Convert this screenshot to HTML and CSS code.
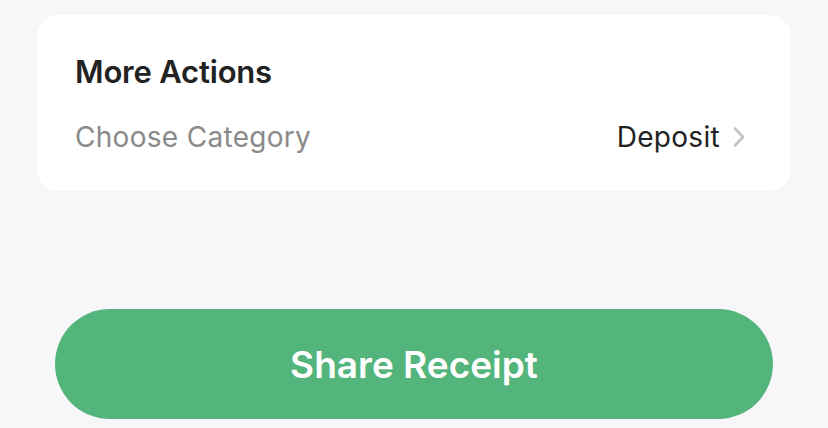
FILE: index.html
```html
<!DOCTYPE html>
<html>
<head>
<meta charset="utf-8">
<link rel="stylesheet" href="styles.css">
</head>
<body>
<div class="page">
  <section class="card">
    <h2 class="card-title">More Actions</h2>
    <div class="row">
      <span class="row-label">Choose Category</span>
      <span class="row-value">Deposit
        <svg class="chev" width="14" height="24" viewBox="0 0 14 24"><path d="M3 3.5 L11 12 L3 20.5" fill="none" stroke="#c4c4c8" stroke-width="2.6" stroke-linecap="round" stroke-linejoin="round"/></svg>
      </span>
    </div>
  </section>
  <button class="share">Share Receipt</button>
</div>
</body>
</html>
```
FILE: styles.css
```css
html, body {
  margin: 0;
  padding: 0;
  background: #f7f7fa;
}
.page {
  width: 828px;
  height: 428px;
  font-family: "Inter", "Noto Sans", sans-serif;
  display: flex;
  flex-direction: column;
  align-items: flex-start;
  padding-top: 15px;
  box-sizing: border-box;
}
.card {
  margin-left: 37px;
  width: 754px;
  height: 176px;
  box-sizing: border-box;
  background: #ffffff;
  border-radius: 22px;
  padding: 41px 45px 0 38px;
}
.card-title {
  margin: 0;
  font-size: 31px;
  font-weight: 600;
  color: #222222;
  line-height: 31px;
  letter-spacing: -0.2px;
}
.row {
  margin-top: 33px;
  display: flex;
  justify-content: space-between;
  align-items: center;
  line-height: 34px;
}
.row-label {
  font-size: 28px;
  color: #8a8a8a;
  letter-spacing: 0.3px;
}
.row-value {
  font-size: 28px;
  color: #222222;
  display: flex;
  align-items: center;
  gap: 12px;
  letter-spacing: 0.3px;
}
.chev {
  display: block;
}
.share {
  margin-top: 118px;
  margin-left: 55px;
  width: 718px;
  height: 110px;
  border: none;
  border-radius: 55px;
  background: #54b57c;
  color: #ffffff;
  font-family: "Inter", "Noto Sans", sans-serif;
  font-size: 37px;
  font-weight: 600;
  padding: 0;
}
```
